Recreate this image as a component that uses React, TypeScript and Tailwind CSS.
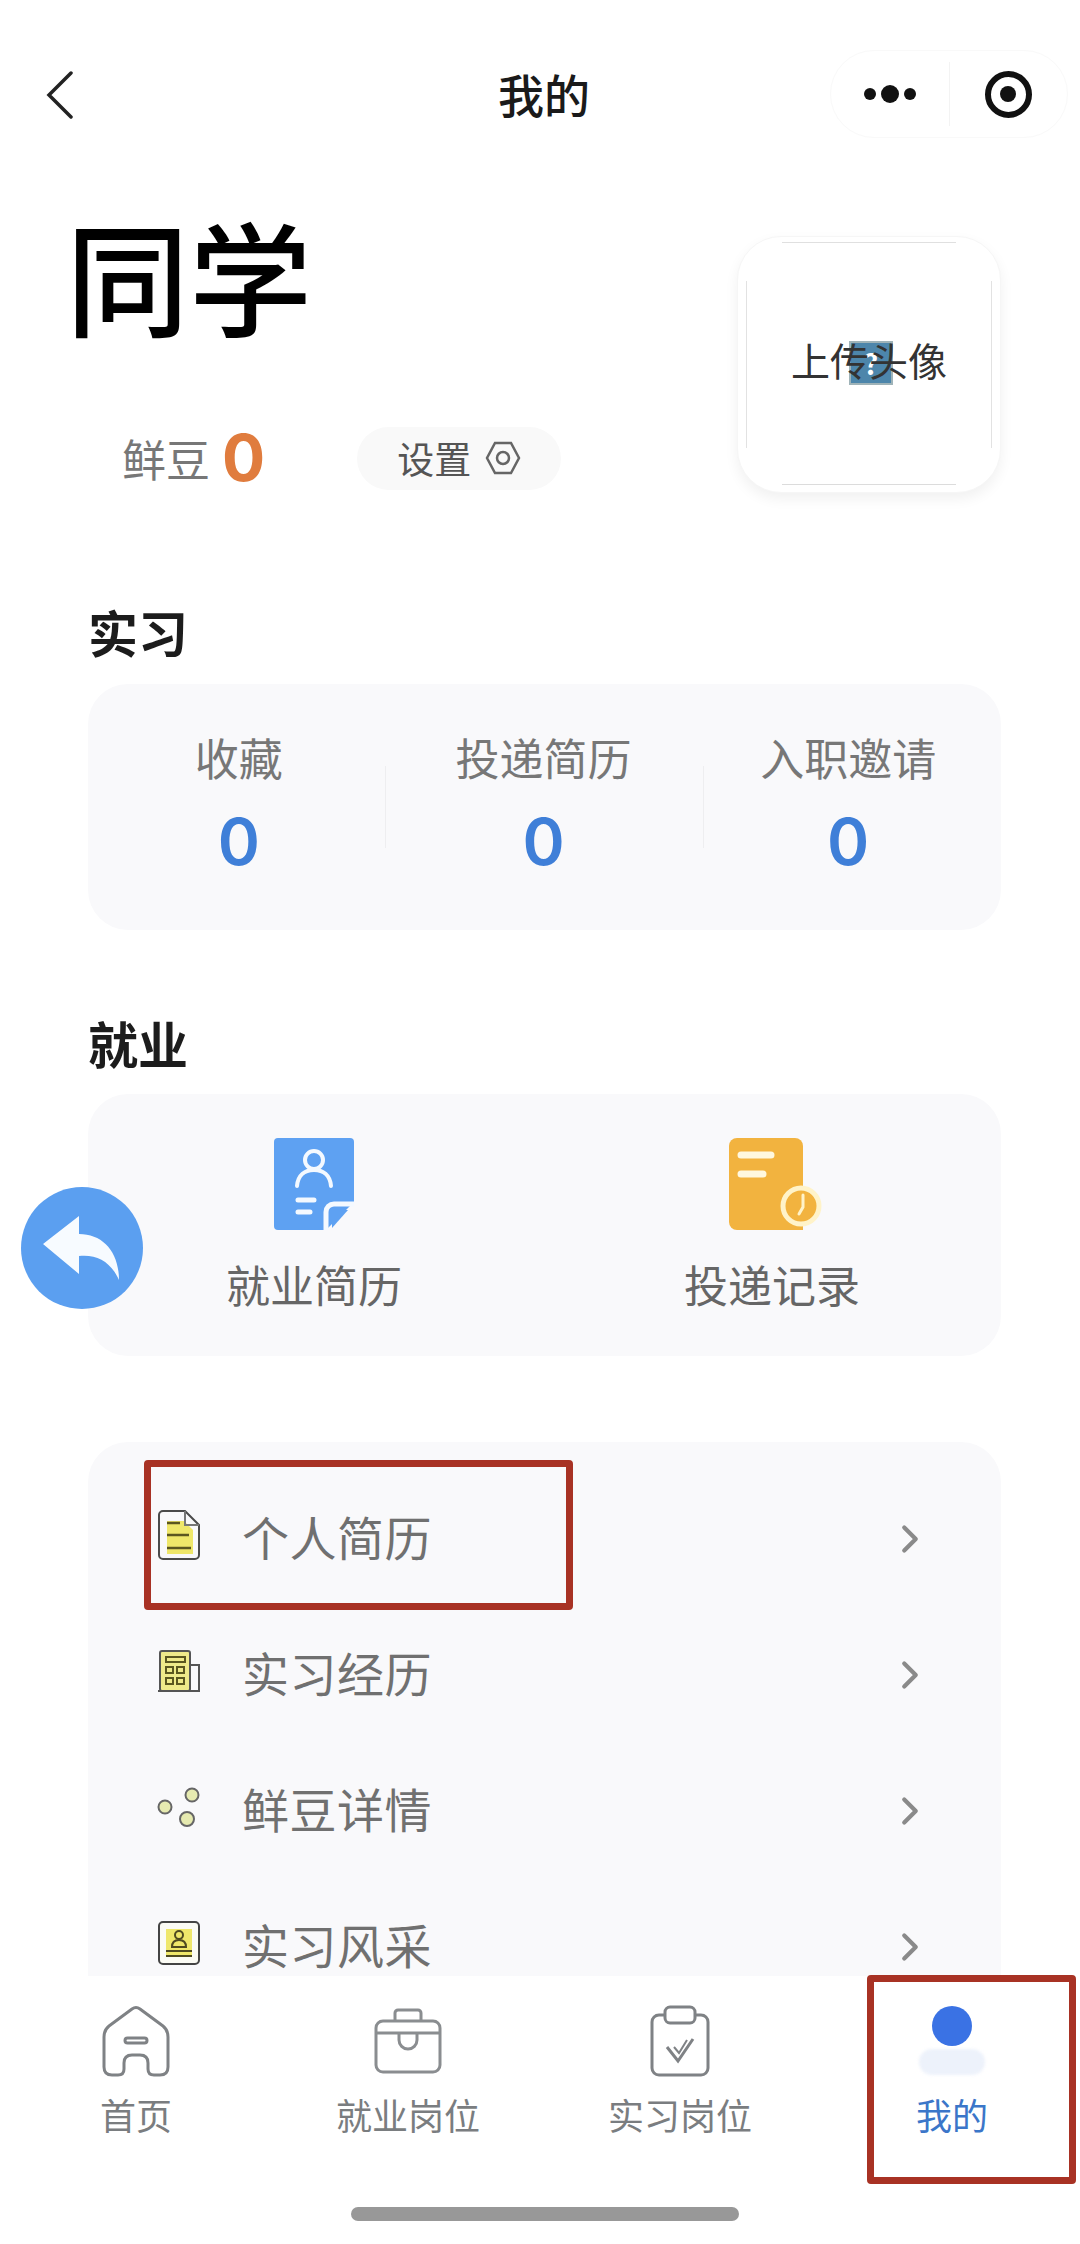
import React from 'react';
import { ChevronRight } from 'lucide-react';

const CJK = "font-['Noto_Sans_CJK_SC','Noto_Sans',sans-serif]";

const ResumeIcon = () => (
  <svg width="44" height="52" viewBox="0 0 44 52" fill="none">
    <path d="M10 12h17l9 9v24H10z" fill="#efe76a" />
    <path d="M6 2h22l14 14v30a4 4 0 0 1-4 4H6a4 4 0 0 1-4-4V6a4 4 0 0 1 4-4z" stroke="#4b4b4b" strokeWidth="2" />
    <path d="M28 2v14h14" stroke="#777" strokeWidth="2" />
    <path d="M10 14h13M10 26h22M10 39h24" stroke="#5b5620" strokeWidth="2.5" />
  </svg>
);

const BuildingIcon = () => (
  <svg width="44" height="44" viewBox="0 0 44 44" fill="none">
    <rect x="3" y="2" width="30" height="40" rx="2" fill="#efe98a" stroke="#555" strokeWidth="2" />
    <path d="M33 16h9v26H33" stroke="#555" strokeWidth="2" />
    <path d="M1 42h42" stroke="#555" strokeWidth="2" />
    <rect x="9" y="8" width="19" height="5" fill="none" stroke="#5b5620" strokeWidth="2" />
    <rect x="9" y="18" width="7" height="6" fill="none" stroke="#5b5620" strokeWidth="2" />
    <rect x="20" y="18" width="7" height="6" fill="none" stroke="#5b5620" strokeWidth="2" />
    <rect x="9" y="29" width="7" height="6" fill="none" stroke="#5b5620" strokeWidth="2" />
    <rect x="20" y="29" width="7" height="6" fill="none" stroke="#5b5620" strokeWidth="2" />
  </svg>
);

const BeansIcon = () => (
  <svg width="44" height="40" viewBox="0 0 44 40" fill="none">
    <circle cx="8" cy="20" r="6.5" fill="#e6eab0" stroke="#666" strokeWidth="2" />
    <circle cx="35" cy="8" r="6.5" fill="#e6eab0" stroke="#666" strokeWidth="2" />
    <circle cx="30" cy="32" r="7" fill="#e6eab0" stroke="#666" strokeWidth="2" />
  </svg>
);

const BadgeIcon = () => (
  <svg width="44" height="46" viewBox="0 0 44 46" fill="none">
    <rect x="2" y="2" width="40" height="42" rx="4" fill="#fbfbf4" stroke="#444" strokeWidth="2" />
    <rect x="9" y="9" width="26" height="27" fill="#efe76a" />
    <circle cx="22" cy="15" r="4" stroke="#4f4a20" strokeWidth="2" />
    <path d="M15 27c0-5 3-7 7-7s7 2 7 7z" stroke="#4f4a20" strokeWidth="2" />
    <path d="M9 31h26M9 36h26" stroke="#4f4a20" strokeWidth="2" />
  </svg>
);

const HomeIcon = () => (
  <svg width="68" height="72" viewBox="0 0 68 72" fill="none" stroke="#7f8285" strokeWidth="3" strokeLinejoin="round">
    <path d="M30 4 Q34 1 38 4 L61 21 Q66 25 66 32 V62 Q66 70 58 70 H52 Q46 70 46 64 V58 Q46 50 38 50 H30 Q22 50 22 58 V64 Q22 70 16 70 H10 Q2 70 2 62 V32 Q2 25 7 21 Z" />
    <rect x="23" y="33" width="22" height="5" rx="2.5" />
  </svg>
);

const BagIcon = () => (
  <svg width="68" height="66" viewBox="0 0 68 66" fill="none" stroke="#8a8d90" strokeWidth="3">
    <path d="M21 13V5a3 3 0 0 1 3-3h20a3 3 0 0 1 3 3v8" />
    <rect x="2" y="13" width="64" height="51" rx="7" />
    <path d="M2 25h64" />
    <path d="M25 26v6a9 9 0 0 0 18 0v-6" />
  </svg>
);

const ClipboardIcon = () => (
  <svg width="60" height="72" viewBox="0 0 60 72" fill="none" stroke="#7f8285" strokeWidth="3">
    <rect x="2" y="10" width="56" height="60" rx="7" />
    <rect x="15" y="2" width="30" height="16" rx="5" fill="#fff" />
    <path d="M17 42l11 14 15-22" />
    <path d="M24 42l5 6 8-13" strokeWidth="2" />
  </svg>
);

const tabs = [
  { label: '首页', icon: <HomeIcon /> },
  { label: '就业岗位', icon: <BagIcon /> },
  { label: '实习岗位', icon: <ClipboardIcon /> },
  {
    label: '我的',
    active: true,
    icon: (
      <div className="flex w-[68px] h-[70px] flex-col items-center">
        <div className="w-[40px] h-[40px] rounded-full bg-[#3a72e4]" />
        <div className="w-[66px] h-[26px] mt-[3px] rounded-full bg-[#edf2fb] blur-[1.5px]" />
      </div>
    ),
  },
];

const stats = [
  { label: '收藏', val: 0 },
  { label: '投递简历', val: 0 },
  { label: '入职邀请', val: 0 },
];

const menu = [
  { label: '个人简历', icon: <ResumeIcon /> },
  { label: '实习经历', icon: <BuildingIcon /> },
  { label: '鲜豆详情', icon: <BeansIcon /> },
  { label: '实习风采', icon: <BadgeIcon /> },
];

export default function App() {
  return (
    <div className={`relative w-[1080px] h-[2244px] overflow-hidden bg-white flex flex-col ${CJK}`}>
      <div className="flex-1 min-h-0 overflow-hidden pl-[88px] pr-[79px]">
        {/* nav bar */}
        <div className="relative h-[84px] mt-[54px] -ml-[88px] -mr-[79px] flex items-center justify-center pl-[8px] pb-[6px]">
          <svg className="absolute left-[46px] top-[17px]" width="28" height="48" viewBox="0 0 28 48" fill="none" stroke="#222" strokeWidth="3.5" strokeLinecap="round">
            <path d="M25 2 L3 24 L25 46" />
          </svg>
          <span className="text-[46px] leading-none font-medium text-[#1a1a1a]">我的</span>
          <div className="absolute left-[830px] top-[-4px] w-[238px] h-[88px] rounded-[44px] border border-[#f9f9f9] flex items-center">
            <div className="w-[119px] flex items-center justify-center gap-[5px]">
              <div className="w-[12px] h-[12px] rounded-full bg-[#111]" />
              <div className="w-[18px] h-[18px] rounded-full bg-[#111]" />
              <div className="w-[12px] h-[12px] rounded-full bg-[#111]" />
            </div>
            <div className="w-px h-[64px] bg-[#f3f3f3]" />
            <div className="w-[119px] flex justify-center">
              <div className="w-[47px] h-[47px] rounded-full border-[6px] border-[#111] flex items-center justify-center">
                <div className="w-[16px] h-[16px] rounded-full bg-[#111]" />
              </div>
            </div>
          </div>
        </div>

        {/* profile */}
        <div className="flex justify-between items-start -ml-[22px] pt-[98px]">
          <div>
            <div className="text-[123px] leading-[123px] font-medium text-black mt-[-24px]">同学</div>
            <div className="flex items-center mt-[91px]">
              <span className="ml-[56px] text-[44px] leading-none text-[#777]">鲜豆</span>
              <span className="ml-[12px] text-[64px] leading-none font-bold text-[#e07c3e] font-['Inter',sans-serif]">0</span>
              <div className="ml-[92px] w-[204px] h-[63px] rounded-full bg-[#f9f9f9] flex items-center pl-[40px] gap-[14px]">
                <span className="text-[37px] leading-none text-[#555]">设置</span>
                <svg width="36" height="34" viewBox="0 0 36 34" fill="none" stroke="#666" strokeWidth="2.5">
                  <path d="M10 2h16l8 15-8 15H10L2 17z" />
                  <circle cx="18" cy="17" r="6" />
                </svg>
              </div>
            </div>
          </div>
          <div className="relative w-[264px] h-[257px] rounded-[44px] bg-white border border-[#f6f6f6] shadow-[0_6px_14px_rgba(0,0,0,0.06)] flex items-center justify-center">
            <div className="absolute top-[5px] left-[44px] right-[44px] h-px bg-[#e0e0e0]" />
            <div className="absolute bottom-[7px] left-[44px] right-[44px] h-px bg-[#dcdcdc]" />
            <div className="absolute left-[8px] top-[44px] bottom-[44px] w-px bg-[#e2e2e2]" />
            <div className="absolute right-[8px] top-[44px] bottom-[44px] w-px bg-[#e2e2e2]" />
            <div className="absolute left-[111px] top-[104px] w-[44px] h-[44px] border-2 border-[#9fb3b8] bg-[#4d86ab] flex items-center justify-center text-[28px] leading-none font-bold text-white">?</div>
            <span className="relative text-[39px] leading-none text-[#333] -mt-[10px]">上传头像</span>
          </div>
        </div>

        {/* internship */}
        <h2 className="text-[50px] leading-none font-bold text-[#1c1c1c] mt-[113px]">实习</h2>
        <div className="mt-[28px] h-[246px] rounded-[40px] bg-[#f9f9fb] flex items-center">
          {stats.map((s, i) => (
            <React.Fragment key={s.label}>
              {i > 0 && <div className={`w-px h-[82px] bg-[#eeeef0] ${i === 1 ? '-ml-[7px] mr-[7px]' : 'ml-[7px] -mr-[7px]'}`} />}
              <div className="flex-1 flex flex-col items-center pb-[5px] pr-[2px]">
                <span className="text-[44px] leading-none text-[#777]">{s.label}</span>
                <span className="text-[64px] leading-none font-semibold text-[#3f7fd8] mt-[31px] font-['Inter',sans-serif]">{s.val}</span>
              </div>
            </React.Fragment>
          ))}
        </div>

        {/* employment */}
        <h2 className="text-[50px] leading-none font-bold text-[#1c1c1c] mt-[87px]">就业</h2>
        <div className="mt-[27px] h-[262px] rounded-[40px] bg-[#f9f9fb] flex pt-[44px]">
          <div className="w-[452px] flex flex-col items-center">
            <svg width="80" height="92" viewBox="0 0 80 92">
              <path d="M4 0h72a4 4 0 0 1 4 4v60L52 92H4a4 4 0 0 1-4-4V4a4 4 0 0 1 4-4z" fill="#5ea1f2" />
              <circle cx="40" cy="22" r="9" fill="none" stroke="#f4f9ff" strokeWidth="4" />
              <path d="M23 48c1-11 8-16 17-16s16 5 17 16" fill="none" stroke="#f4f9ff" strokeWidth="4" strokeLinecap="round" />
              <path d="M24 62h16M24 74h12" stroke="#f4f9ff" strokeWidth="5" strokeLinecap="round" />
              <path d="M80 66H60a8 8 0 0 0-8 8v18" fill="none" stroke="#f4f9ff" strokeWidth="5" />
              <path d="M58 72h16L58 90z" fill="#5ea1f2" />
            </svg>
            <span className="text-[44px] leading-none text-[#666] mt-[32px]">就业简历</span>
          </div>
          <div className="flex-1 flex flex-col items-center">
            <svg width="96" height="92" viewBox="0 0 96 92" className="ml-[12px]">
              <path d="M8 0h58a8 8 0 0 1 8 8v84H8a8 8 0 0 1-8-8V8a8 8 0 0 1 8-8z" fill="#f2b33f" />
              <path d="M12 17h30M12 36h22" stroke="#fff8df" strokeWidth="7" strokeLinecap="round" />
              <circle cx="72" cy="68" r="18" fill="#f2b33f" stroke="#fff3c9" strokeWidth="5" />
              <path d="M74 57v12l-4 7" fill="none" stroke="#fff3c9" strokeWidth="3" strokeLinecap="round" />
            </svg>
            <span className="text-[44px] leading-none text-[#666] mt-[32px] ml-[3px]">投递记录</span>
          </div>
        </div>

        {/* menu */}
        <div className="mt-[86px] rounded-t-[40px] bg-[#f9f9fb] pt-[25px] pl-[69px] pr-[68px] pb-[40px]">
          {menu.map((m) => (
            <div key={m.label} className="h-[136px] flex items-center">
              <div className="w-[44px] flex justify-center">{m.icon}</div>
              <span className="ml-[41px] text-[47px] leading-none tracking-[0.5px] text-[#707070]">{m.label}</span>
              <ChevronRight className="ml-auto mt-[8px] text-[#8a8a8a]" size={46} strokeWidth={2.2} />
            </div>
          ))}
        </div>
      </div>

      {/* tab bar */}
      <div className="h-[268px] shrink-0 bg-white relative">
        <div className="flex pt-[29px]">
          {tabs.map((t) => (
            <div key={t.label} className="w-[272px] shrink-0 flex flex-col items-center">
              <div className="h-[72px] flex items-center">{t.icon}</div>
              <span className={`text-[36px] leading-none mt-[19px] ${t.active ? 'text-[#3b76c9]' : 'text-[#7a7d80]'}`}>{t.label}</span>
            </div>
          ))}
        </div>
        <div className="absolute left-[351px] top-[231px] w-[388px] h-[14px] rounded-full bg-[#989898]" />
      </div>

      {/* floating back button */}
      <div className="absolute left-[21px] top-[1187px] w-[122px] h-[122px] rounded-full bg-[#5b9ff0] flex items-center justify-center">
        <svg width="82" height="64" viewBox="0 0 82 64">
          <path d="M38 0 L2 28 L38 58 V40 C56 38 70 46 78 64 C78 36 62 18 38 18 Z" fill="#f7fbff" />
        </svg>
      </div>

      {/* red annotation boxes */}
      <div className="absolute left-[144px] top-[1460px] w-[429px] h-[150px] rounded-[4px] border-[7px] border-[#a83224]" />
      <div className="absolute left-[867px] top-[1975px] w-[209px] h-[209px] rounded-[4px] border-[7px] border-[#a83224]" />
    </div>
  );
}
